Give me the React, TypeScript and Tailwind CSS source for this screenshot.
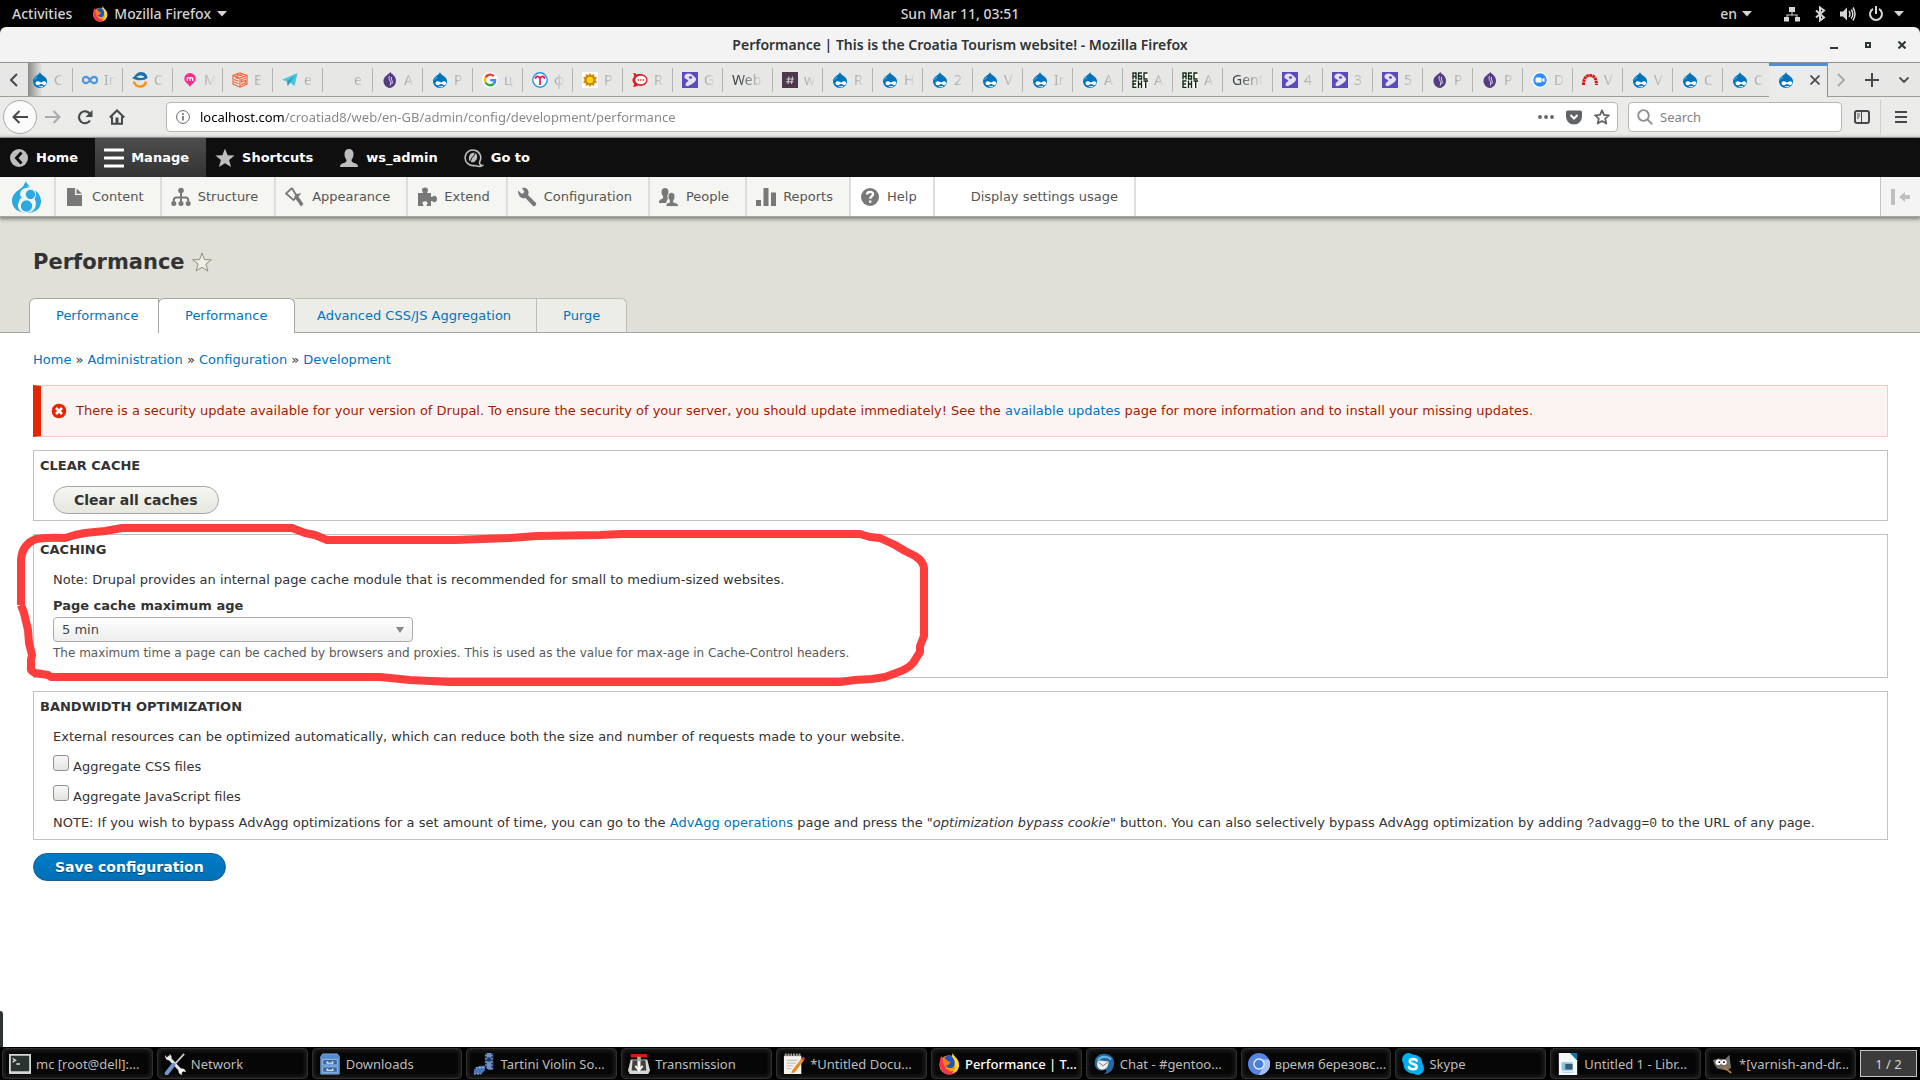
import React, { useState } from 'react';

type FaviconName =
  | 'drupal' | 'infinity' | 'swirl' | 'pin' | 'cube' | 'plane' | 'purple' | 'google' | 'curl' | 'sun'
  | 'bubble' | 'gentoo' | 'hash' | 'abc' | 'zoom' | 'arc' | 'none';

interface BrowserTab {
  icon: FaviconName;
  label: string;
}

const TABS: BrowserTab[] = [
  { icon: 'drupal', label: 'C' },
  { icon: 'infinity', label: 'In' },
  { icon: 'swirl', label: 'C' },
  { icon: 'pin', label: 'M' },
  { icon: 'cube', label: 'E' },
  { icon: 'plane', label: 'e' },
  { icon: 'none', label: 'e' },
  { icon: 'purple', label: 'A' },
  { icon: 'drupal', label: 'P' },
  { icon: 'google', label: 'ц' },
  { icon: 'curl', label: 'ф' },
  { icon: 'sun', label: 'P' },
  { icon: 'bubble', label: 'R' },
  { icon: 'gentoo', label: 'G' },
  { icon: 'none', label: 'Web' },
  { icon: 'hash', label: 'w' },
  { icon: 'drupal', label: 'R' },
  { icon: 'drupal', label: 'H' },
  { icon: 'drupal', label: '2' },
  { icon: 'drupal', label: 'V' },
  { icon: 'drupal', label: 'In' },
  { icon: 'drupal', label: 'A' },
  { icon: 'abc', label: 'A' },
  { icon: 'abc', label: 'A' },
  { icon: 'none', label: 'Gent' },
  { icon: 'gentoo', label: '4' },
  { icon: 'gentoo', label: '3' },
  { icon: 'gentoo', label: '5' },
  { icon: 'purple', label: 'P' },
  { icon: 'purple', label: 'P' },
  { icon: 'zoom', label: 'D' },
  { icon: 'arc', label: 'V' },
  { icon: 'drupal', label: 'V' },
  { icon: 'drupal', label: 'C' },
  { icon: 'drupal', label: 'C' },
];

const Favicon: React.FC<{ name: FaviconName }> = ({ name }) => {
  const props = { viewBox: '0 0 16 16', className: 'w-4 h-4 shrink-0' };
  switch (name) {
    case 'drupal':
      return (
        <svg {...props}>
          <path d="M8 0C8.4 1.8 9.7 2.7 11 3.5 13.4 5 15 6.900 15 9.300 15 13 12 16 8 16S1 13 1 9.300C1 6.900 2.600 4.900 4.800 3.500 6.300 2.500 7.700 1.700 8 0Z" fill="#0073ba" />
          <path d="M4.500 4.800C3 6 2.200 7 2 8.500c1.500-1.500 2.500-2 3.500-3.500Z" fill="#5bb0e4" />
          <path d="M5.800 9.200C7.600 9.200 8.400 10.500 9.200 10.500S10.600 9.300 12.200 9.300c1.400 0 2 .9 2 1.800 0 1.200-.8 2.100-2 2.100-1.300 0-2-1.200-3-1.200S7.400 13.200 5.900 13.200C4.400 13.200 3.500 12.300 3.500 11.200S4.500 9.200 5.800 9.200Z" fill="#fff" />
          <path d="M6.800 14.200c1.300.8 3 .8 4.300 0" stroke="#fff" strokeWidth="1" fill="none" />
        </svg>
      );
    case 'infinity':
      return (
        <svg {...props}>
          <path d="M8 8C6.800 6 5.600 4.800 4 4.800a3.200 3.200 0 0 0 0 6.400c1.600 0 2.800-1.200 4-3.200s2.400-3.200 4-3.200a3.200 3.200 0 0 1 0 6.400c-1.600 0-2.800-1.200-4-3.200Z" fill="none" stroke="#5294d8" strokeWidth="2.200" />
        </svg>
      );
    case 'swirl':
      return (
        <svg {...props}>
          <path d="M0 6C3 5 4 0 9 0c4 0 6.500 3 6.500 6-3 2.500-10 3.500-15.500 0Z" fill="#1d6fa9" />
          <path d="M4.500 5c2-2 6-2 8 0-2 1.300-5 1.300-8 0Z" fill="#d8eff8" />
          <path d="M1.800 9.500c1 3.500 3.500 5 6.200 5s5.500-1.500 6-5" fill="none" stroke="#f7941e" strokeWidth="2.600" />
        </svg>
      );
    case 'pin':
      return (
        <svg {...props}>
          <path d="M8 1a6 5.800 0 0 1 5.800 5.800C13.800 10.500 9 12 8 15 7 12 2.300 10.500 2.300 6.800A5.800 5.800 0 0 1 8 1Z" fill="#fb2b8c" />
          <path d="M5.300 9V5.500M5.300 6.200q1.400-1.200 2.700 0V9M8 6.200q1.400-1.200 2.700 0V9" fill="none" stroke="#fff" strokeWidth="1.200" />
        </svg>
      );
    case 'cube':
      return (
        <svg {...props} fill="none" stroke="#f26a3f" strokeWidth="1.200">
          <path d="M8 .8 15 3.500v8.500L8 15.200 1 12V3.500ZM1 3.500 8 6l7-2.500M8 6v9M3 5.500l3.500 1.200M2 7.500l4.500 1.800M2 10l4.500 1.800M14 6 9.500 7.800v2l4-1.400v2.400l-4 1.800M5 2.500l6.500 2M4.500 4 11 2" />
        </svg>
      );
    case 'plane':
      return (
        <svg {...props}>
          <path d="M0 7.800 15.500 1 12.500 14 8 10.500 5.800 14 5 9.600Z" fill="#47c5de" />
          <path d="M5 9.600 13 3.500 8 10.500 5.800 14Z" fill="#2b9fba" />
        </svg>
      );
    case 'purple':
      return (
        <svg {...props}>
          <path d="M8.500 0c.3 2 5.500 3 5.500 8.500 0 4.500-3 7-6 7.500C4 15.500 1.500 12.500 1.500 9 1.500 4.500 5 3.500 8.500 0Z" fill="#553c86" />
          <path d="M7.500 4c-2 3.500 2.500 5 .8 9.500M9.500 5c-1.200 2.500 2 4 .3 7" fill="none" stroke="#eee" strokeWidth=".9" />
        </svg>
      );
    case 'google':
      return (
        <svg {...props}>
          <circle cx="8" cy="8" r="8" fill="#fff" />
          <g fill="none" strokeWidth="2.400">
            <path d="M11.800 4.200A5.200 5.200 0 0 0 3.500 5.500" stroke="#ea4335" />
            <path d="M3.500 5.500a5.200 5.200 0 0 0 0 5" stroke="#fbbc05" />
            <path d="M3.500 10.500a5.200 5.200 0 0 0 8 1.500" stroke="#34a853" />
            <path d="M11.500 12A5 5 0 0 0 13.200 8.300H8.200" stroke="#4285f4" />
          </g>
        </svg>
      );
    case 'curl':
      return (
        <svg {...props}>
          <circle cx="8" cy="8" r="7.200" fill="#fff" stroke="#1a9bf0" strokeWidth="1.400" />
          <path d="M3.500 7c0-3.500 3.500-3.500 4.500-.5 1-3 4.500-3 4.500.5M8 5.500V13" fill="none" stroke="#e8175d" strokeWidth="1.700" />
        </svg>
      );
    case 'sun':
      return (
        <svg {...props}>
          <path d="M0 0h16v16H0z" fill="#fff" />
          <path d="m8 1 1.500 2.200L12 2l.5 2.700L15 5.500 13.500 8l1.500 2.500-2.500.8L12 14l-2.500-1.200L8 15l-1.500-2.200L4 14l-.5-2.700L1 10.500 2.500 8 1 5.500l2.500-.8L4 2l2.500 1.200Z" fill="#d98a00" />
          <circle cx="8" cy="8" r="4" fill="#ffd21c" stroke="#c26a00" strokeWidth=".8" />
        </svg>
      );
    case 'bubble':
      return (
        <svg {...props}>
          <path d="M1 1c2 0 3 .6 3.600 1.400C11 1 15.500 4 15.500 8s-4 6.800-9.500 5.600C4.600 14.500 3 15 1 14.800 2 13.500 2.200 12.500 2 11.500-.2 9 0 7 2 5 2.200 3.500 2 2 1 1Z" fill="#db2323" />
          <ellipse cx="8.800" cy="8" rx="5.500" ry="4.200" fill="#fff" />
          <path d="M5.700 8h1.400M8.200 8h1.400M10.700 8h1.400" stroke="#db2323" strokeWidth="1.500" />
        </svg>
      );
    case 'gentoo':
      return (
        <svg {...props}>
          <path d="M0 0h16v16H0z" fill="#5d4bbd" />
          <path d="M3.500 2.500C7 0 11 2.500 14 6.500c1 2-3 5.500-8 7.500-2.500.5-3.500-1.500-1-4C7 8.500 6.500 8 5 7.500 2.500 6.500 1.500 4.500 3.500 2.500Z" fill="#e4e2f5" />
          <ellipse cx="8.500" cy="5.500" rx="1.600" ry="1.200" fill="#5d4bbd" />
        </svg>
      );
    case 'hash':
      return (
        <svg {...props}>
          <path d="M0 0h16v16H0z" fill="#4d394b" />
          <path d="M7 4.500 6 12M10.500 4.500l-1 7.500M4.500 7h7.500M4 9.800h7.500" stroke="#d7d2d6" strokeWidth="1" />
        </svg>
      );
    case 'abc':
      return (
        <svg {...props} fill="none" stroke="#12290f" strokeWidth="1.400">
          <path d="M0 0h16v16H0z" fill="#fff" stroke="none" />
          <path d="M1 7.500V1h3v6.500M1 4.500h3M10 1H6.500v6h3V4h-3M15.500 1H12v6h3.500M4.500 9H1v6.500h3.500M1 12h3M6.500 8.500v7.500M9.500 8.500v7.500M6.500 12h3M11.500 9h4.500M13.700 9v7" />
        </svg>
      );
    case 'zoom':
      return (
        <svg {...props}>
          <circle cx="8" cy="8" r="7.300" fill="#2d8cff" stroke="#fff" strokeWidth="1.200" />
          <path d="M3.600 5.500h4.900c.8 0 1 .5 1 1v4h-5c-.6 0-1-.4-1-1ZM10 7.300l2.500-1.800v5L10 8.800Z" fill="#fff" />
        </svg>
      );
    case 'arc':
      return (
        <svg {...props}>
          <path d="M1.500 13c0-6 2-9.500 6.500-9.500s6.500 3.500 6.500 9.500" fill="none" stroke="#d61414" strokeWidth="3" strokeDasharray="2.500 .6" />
        </svg>
      );
    default:
      return null;
  }
};

const FirefoxIcon: React.FC<{ className?: string }> = ({ className }) => (
  <svg viewBox="0 0 24 24" className={className}>
    <circle cx="12" cy="13" r="10.500" fill="#ff9a1f" />
    <path d="M2 9C1 16 5 24 13 23.500c5 0 8-3 9-6-4 3-9 3.500-12 .5C7 16 6 12 8 9L5 6 4 3C3 5 2 6.500 2 9Z" fill="#f6324f" />
    <path d="M16 0c1 4 7 6 7 13 0 5-4 9-8 9 4-3 5-8 3-11-1-3-4-5-2-11Z" fill="#ffd837" />
    <path d="M7 6c2-4 7-4 9-1 3 3 3 9 0 11-3 1-7 0-8-3l4-2-1-2-3-1Z" fill="#1d55c0" />
    <path d="M5 6c3 0 4 1 6 3l3 1-3 3c-2 0-3 1-2 3-3-2-4-6-4-10Z" fill="#ff7a18" />
  </svg>
);

const Caret: React.FC = () => (
  <svg viewBox="0 0 10 6" className="w-[10px] h-[6px]"><path d="M0 0h10L5 5.500Z" fill="#d6d6d6" /></svg>
);

const GnomeBar: React.FC = () => (
  <header className="h-[27px] bg-black text-[#d3d3d3] text-[14px] font-medium grid grid-cols-3 items-center font-['Noto_Sans',sans-serif]">
    <div className="flex items-center pl-3">
      <button>Activities</button>
      <button className="flex items-center ml-5">
        <FirefoxIcon className="w-4 h-4 mr-[6px]" />
        <span className="mr-[6px]">Mozilla Firefox</span>
        <Caret />
      </button>
    </div>
    <div className="text-center">Sun Mar 11, 03:51</div>
    <div className="flex items-center justify-end pr-4">
      <button className="flex items-center gap-[5px] mr-8">en <Caret /></button>
      <svg viewBox="0 0 16 16" className="w-4 h-4 mr-3" fill="#d6d6d6">
        <path d="M5 1h6v5H5zM0 11h5v4.500H0zM11 11h5v4.500h-5zM7.500 6h1v2.500h5V11h-1V9.500h-9V11h-1V8.500h5Z" />
      </svg>
      <svg viewBox="0 0 16 16" className="w-4 h-4 mr-3" fill="none" stroke="#d6d6d6" strokeWidth="2">
        <path d="m4 4.500 8 7-4 3V1.500l4 3-8 7" />
      </svg>
      <svg viewBox="0 0 16 16" className="w-4 h-4 mr-3" fill="none" stroke="#d6d6d6" strokeWidth="1.500">
        <path d="M0 5.500h3l4-4v13l-4-4H0Z" fill="#d6d6d6" stroke="none" />
        <path d="M9 5q2 3 0 6M11.300 3.500q3 4.500 0 9M13 1.500q4 6.500 0 13" />
      </svg>
      <svg viewBox="0 0 16 16" className="w-4 h-4 mr-[10px]" fill="none" stroke="#d6d6d6" strokeWidth="2">
        <path d="M5 2.800a6 6 0 1 0 6 0M8 0v8" />
      </svg>
      <Caret />
    </div>
  </header>
);

const TitleBar: React.FC = () => (
  <div className="h-9 bg-[#f3f3f3] rounded-t-md border-b border-[#8f908c] grid grid-cols-[1fr_auto_1fr] items-center text-[14px] font-semibold text-[#2e3436] font-['Noto_Sans',sans-serif]">
    <span />
    <h2>Performance | This is the Croatia Tourism website! - Mozilla Firefox</h2>
    <div className="flex items-center justify-end gap-[26px] pr-[14px]">
      <button aria-label="Minimize"><svg viewBox="0 0 8 8" className="w-2 h-2"><path d="M0 6h8v2H0z" fill="#2e3436" /></svg></button>
      <button aria-label="Maximize"><svg viewBox="0 0 8 8" className="w-2 h-2"><path d="M2 2h4v4H2z" fill="none" stroke="#2e3436" strokeWidth="2" /></svg></button>
      <button aria-label="Close"><svg viewBox="0 0 8 8" className="w-2 h-2"><path d="m.5.5 7 7m0-7-7 7" stroke="#2e3436" strokeWidth="2" /></svg></button>
    </div>
  </div>
);

const tabWidth = (i: number) => {
  if (i === 0) return 'w-[45px] pl-1 border-[#b3b3b1]';
  if (i === TABS.length - 1) return 'w-[46px] pl-[9px] border-transparent';
  return 'w-[50px] pl-[9px] border-[#b3b3b1]';
};

const TabStrip: React.FC = () => (
  <div className="h-[34px] bg-[#e7e7e6] flex border-b border-[#9c9c99] text-[14px] text-[#3c4144] font-['Noto_Sans',sans-serif]">
    <button aria-label="Scroll tabs left" className="w-7 shrink-0 flex items-center justify-center">
      <svg viewBox="0 0 8 14" className="w-2 h-[14px]"><path d="M7 1 1 7l6 6" fill="none" stroke="#45494c" strokeWidth="2" /></svg>
    </button>
    <div className="flex flex-1 min-w-0 bg-linear-to-r from-[#8c8c8c] to-[#e7e7e6] to-[14px]">
      {TABS.map((tab, i) => (
        <div key={i} className={`flex items-center shrink-0 h-6 mt-[5px] overflow-hidden border-r ${tabWidth(i)}`}>
          <Favicon name={tab.icon} />
          {tab.icon !== 'none' ? (
            <span className="ml-[6px] w-3 overflow-hidden opacity-40 [mask-image:linear-gradient(to_right,black,transparent)]">{tab.label}</span>
          ) : tab.label === 'e' ? (
            <span className="ml-[22px] w-3 opacity-40 [mask-image:linear-gradient(to_right,black,transparent)]">{tab.label}</span>
          ) : (
            <span className="w-[31px] overflow-hidden [mask-image:linear-gradient(to_right,black_20%,transparent)]">{tab.label}</span>
          )}
        </div>
      ))}
      <div className="w-[59px] shrink-0 h-[34px] bg-[#ebebea] border-t-[3px] border-r border-t-[#4a90d9] border-r-[#8f908c] flex items-center pl-[9px] pb-[3px] gap-4">
        <Favicon name="drupal" />
        <button aria-label="Close tab">
          <svg viewBox="0 0 10 10" className="w-[10px] h-[10px]"><path d="m.5.5 9 9m0-9-9 9" stroke="#4c4f51" strokeWidth="1.800" /></svg>
        </button>
      </div>
    </div>
    <div className="flex items-center gap-5 pr-[11px]">
      <button aria-label="Scroll tabs right"><svg viewBox="0 0 8 14" className="w-2 h-[14px]"><path d="m1 1 6 6-6 6" fill="none" stroke="#aaabab" strokeWidth="2" /></svg></button>
      <button aria-label="New tab"><svg viewBox="0 0 14 14" className="w-[14px] h-[14px]"><path d="M7 0v14M0 7h14" stroke="#45494c" strokeWidth="2" /></svg></button>
      <button aria-label="List all tabs"><svg viewBox="0 0 10 6" className="w-[10px] h-[6px]"><path d="m.5.5 4.500 4.500 4.500-4.500" fill="none" stroke="#45494c" strokeWidth="1.800" /></svg></button>
    </div>
  </div>
);

const NavBar: React.FC = () => {
  const [url, setUrl] = useState('localhost.com/croatiad8/web/en-GB/admin/config/development/performance');

  return (
    <div className="h-[41px] bg-[#ebebea] border-b border-[#b3b3b1] flex items-center pl-[3px] pr-[13px] text-[13px] font-['Noto_Sans',sans-serif]">
      <button aria-label="Back" className="w-[34px] h-[34px] rounded-full bg-[#fbfbfb] border border-[#a9a9a7] flex items-center justify-center shrink-0">
        <svg viewBox="0 0 16 14" className="w-4 h-[14px]"><path d="M7.500 1 1.500 7l6 6M1.500 7H16" fill="none" stroke="#45494c" strokeWidth="2" /></svg>
      </button>
      <button aria-label="Forward" className="ml-2">
        <svg viewBox="0 0 16 14" className="w-4 h-[14px]"><path d="m8.500 1 6 6-6 6M14.500 7H0" fill="none" stroke="#a9abac" strokeWidth="2" /></svg>
      </button>
      <button aria-label="Reload" className="ml-4">
        <svg viewBox="0 0 16 16" className="w-4 h-4"><path d="M13 11.500A6 6 0 1 1 13 5" fill="none" stroke="#45494c" strokeWidth="2.200" /><path d="M15.500 1v7h-7Z" fill="#45494c" /></svg>
      </button>
      <button aria-label="Home" className="ml-4">
        <svg viewBox="0 0 16 16" className="w-4 h-4"><path d="M.8 8.500 8 1.500l7.200 7M3 7.500v7.300h10V7.500" fill="none" stroke="#45494c" strokeWidth="2" /><path d="M6.500 8.500h3V15h-3z" fill="#45494c" /></svg>
      </button>
      <div className="flex-1 min-w-0 h-[30px] ml-[41px] bg-white border border-[#b6b6b3] rounded flex items-center pl-[9px] pr-[7px]">
        <svg viewBox="0 0 14 14" className="w-[14px] h-[14px] shrink-0" fill="none" stroke="#65696b"><circle cx="7" cy="7" r="6.400" /><path d="M7 6v4.500M7 3.300V5" strokeWidth="1.600" /></svg>
        <input
          aria-label="Address"
          value={url}
          onChange={(e) => setUrl(e.target.value)}
          className="flex-1 min-w-0 ml-[10px] outline-none text-transparent bg-clip-text bg-linear-to-r from-black from-[84px] to-[#858585] to-[84px]"
        />
        <button aria-label="Page actions"><svg viewBox="0 0 16 4" className="w-4 h-1" fill="#616466"><circle cx="2" cy="2" r="1.900" /><circle cx="8" cy="2" r="1.900" /><circle cx="14" cy="2" r="1.900" /></svg></button>
        <button aria-label="Save to Pocket" className="ml-3"><svg viewBox="0 0 16 15" className="w-4 h-[15px]"><path d="M2 .5h12c1.300 0 2 .7 2 2V6c0 5-3.600 8.500-8 8.500S0 11 0 6V2.500c0-1.300.7-2 2-2Z" fill="#616466" /><path d="m4.500 5 3.500 3.500L11.500 5" fill="none" stroke="#fff" strokeWidth="2" /></svg></button>
        <button aria-label="Bookmark this page" className="ml-3"><svg viewBox="0 0 16 16" className="w-4 h-4"><path d="m8 1.300 2 4.500 4.900.5-3.700 3.300 1.100 4.900L8 12l-4.300 2.500 1.100-4.900L1.100 6.300 6 5.800Z" fill="none" stroke="#616466" strokeWidth="1.800" strokeLinejoin="round" /></svg></button>
      </div>
      <label className="w-[214px] h-[30px] ml-[10px] bg-white border border-[#b6b6b3] rounded flex items-center pl-2 gap-[7px]">
        <svg viewBox="0 0 16 16" className="w-4 h-4 shrink-0" fill="none" stroke="#8c8f90" strokeWidth="1.800"><circle cx="6.500" cy="6.500" r="5.300" /><path d="m10.300 10.300 5 5" /></svg>
        <input aria-label="Search" placeholder="Search" className="flex-1 min-w-0 outline-none placeholder:text-[#7f8283]" />
      </label>
      <button aria-label="Sidebars" className="ml-3">
        <svg viewBox="0 0 16 14" className="w-4 h-[14px]" fill="none" stroke="#45494c"><rect x="1" y="1" width="14" height="12" rx="2" strokeWidth="2" /><path d="M7.500 1v12M3 4h3M3 6h3M3 8h2" /></svg>
      </button>
      <span className="w-px h-[34px] bg-[#cfcfcd] ml-[10px]" />
      <button aria-label="Open menu" className="ml-[14px]">
        <svg viewBox="0 0 12 12" className="w-3 h-3"><path d="M0 1h12M0 6h12M0 11h12" stroke="#45494c" strokeWidth="2" /></svg>
      </button>
    </div>
  );
};

const ADMIN_LINKS = [
  {
    label: 'Home',
    icon: <><circle cx="10" cy="10" r="9" fill="#bebebe" /><path d="m12.500 4.500-5 5.500 5 5.500" fill="none" stroke="#0f0f0f" strokeWidth="3" /></>,
  },
  {
    label: 'Manage',
    icon: <path d="M1 2h18M1 10h18M1 18h18" stroke="#fff" strokeWidth="3.200" strokeLinecap="round" />,
    active: true,
  },
  {
    label: 'Shortcuts',
    icon: <path d="m10 .5 2.600 6.700 7 .4-5.500 4.500 2 7L10 15.300 3.900 19l2-7L.4 7.600l7-.4Z" fill="#bebebe" />,
  },
  {
    label: 'ws_admin',
    icon: <path d="M10 1c3 0 4.500 2 4.500 5 0 3-1 4-2 6 0 2 1 2.500 3.500 3.200 2 .6 3 1.800 3 3.800H1c0-2 1-3.200 3-3.800C6.500 14.500 7.500 14 7.500 12c-1-2-2-3-2-6 0-3 1.500-5 4.500-5Z" fill="#bebebe" />,
  },
  {
    label: 'Go to',
    icon: (
      <>
        <path d="M15.500 14A7.800 7.800 0 1 0 10 17.500c3 0 5.500 2.500 8.500 0-2 0-3-1.500-3-3.500Z" fill="none" stroke="#bebebe" strokeWidth="1.600" />
        <ellipse cx="9" cy="9.500" rx="4" ry="5" transform="rotate(25 9 9.500)" fill="#bebebe" />
        <path d="M11 5c-1 4-4 4-4.500 9" fill="none" stroke="#0f0f0f" />
      </>
    ),
  },
];

const MENU_LINKS = [
  { label: 'Content', icon: <><path d="M2 1h8v7h7v11H2Z" /><path d="M11.500 1.500 17 6.800h-5.500Z" /></> },
  {
    label: 'Structure',
    icon: (
      <>
        <circle cx="10" cy="3.500" r="2.800" /><circle cx="2.800" cy="16.500" r="2.500" /><circle cx="10" cy="16.500" r="2.500" /><circle cx="17.200" cy="16.500" r="2.500" />
        <path d="M10 4v12M2.800 16v-3q0-2.500 2.500-2.500h9.400q2.500 0 2.500 2.500v3" fill="none" stroke="#787878" strokeWidth="2" />
      </>
    ),
  },
  { label: 'Appearance', icon: <><path d="M7 1 1 6.500 8.500 13 14 7.500 11 8 7 1" fill="none" stroke="#787878" strokeWidth="1.800" /><path d="m9 9.500 3-2 6.500 9.500-2.500 2.500Z" /></> },
  { label: 'Extend', icon: <path d="M1 6h5c0-1-1-1.500-1-3 0-1.700 1.200-2.500 3-2.500S11 1.500 11 3c0 1.500-1 2-1 3h4v4c2 0 2-1.300 3.500-1.300S20 10 20 12s-1 3.200-2.500 3.200S16 14 14 14v5H9.500c0-1.500 1-2 1-3S9.500 14.300 8 14.300 5.500 15 5.500 16s1 1.500 1 3H1Z" /> },
  { label: 'Configuration', icon: <path d="M1 3.500 5 7l2.500-2L5 1c3-1 6 .5 6.500 3.500.2 1.500 0 2.500-.5 3.500l8 8c1 1.500-1 4-3 3L8.500 11C5 12 1 10 1 3.500Z" /> },
  { label: 'People', icon: <><path d="M6 1c2 0 3.500 1 3.500 4 0 2-1 3-1.200 4.500L9 11l-2 5H0c0-3 1-3.500 4-4.500V9C3 8 2.500 7 2.500 5c0-3 1.500-4 3.500-4Z" /><path d="M12.500 5.500c2.200 0 3.500 1.300 3.500 4 0 2-1 3-1.300 4v1.800c3 .7 4.800 1.200 4.800 4.200H7c0-3 1-3.500 3.500-4.200v-1.800c-.5-1-1.500-2-1.500-4 0-2.700 1.300-4 3.500-4Z" stroke="#f5f5f2" strokeWidth=".8" /></> },
  { label: 'Reports', icon: <path d="M0 13h5v6H0zM7.500 1h5v18h-5zM15 5.500h5V19h-5z" /> },
  { label: 'Help', icon: <><circle cx="10" cy="10" r="9" /><path d="M7 7.500C7 5.500 8.300 4.800 10 4.800s3 .9 3 2.500c0 2-2.800 2-2.800 4.500M10.200 13.500v2.300" fill="none" stroke="#fff" strokeWidth="2.300" /></>, light: true },
  { label: 'Display settings usage', light: true },
];

const DrupalToolbar: React.FC = () => (
  <nav className="relative z-10 text-[13px] shadow-[0_1px_4px_1px_rgba(0,0,0,0.45)]">
    <div className="h-[39px] bg-[#0f0f0f] flex text-white font-bold">
      {ADMIN_LINKS.map((item) => (
        <a key={item.label} href="#" className={`flex items-center h-full pl-[9px] pr-[17px] gap-[7px] ${item.active ? 'bg-linear-to-b from-[#4d4d4d] to-[#333]' : ''}`}>
          <svg viewBox="0 0 20 20" className="w-5 h-5">{item.icon}</svg>
          {item.label}
        </a>
      ))}
    </div>
    <div className="h-10 bg-white flex text-[#565656] border-b border-[#a6a6a6]">
      <a href="#" aria-label="Drupal" className="w-[56px] bg-[#f5f5f2] border-r-2 border-[#ddd] flex items-center justify-center">
        <svg viewBox="0 0 32 32" className="w-8 h-8">
          <path d="M15 0c1 4 5 6 8 8.500 4.500 3 7 7 7 12C30 27 25 32 16 32S1 27 1 20c0-5 3-8.500 7.500-11.500C12 6 14 4 15 0Z" fill="#2ba9e0" />
          <path d="M10 9.500a8 8 0 1 1 13.500 8.500C27 23 24 32 15.500 32 6 32 5.500 23 9 19c-3-3-2-7 1-9.500Z" fill="#f5f5f2" />
          <circle cx="19.500" cy="13.500" r="4.700" fill="#2ba9e0" />
          <circle cx="15.500" cy="25" r="5.700" fill="#2ba9e0" />
          <path d="M14 1c1 4 3 5 5 6-4-1-8 1-9 3-2 3 0 6 1 7-4 1-6 5-5 10-4-4-5-9-3-13 3-5 10-6 11-13Z" fill="#2ba9e0" />
        </svg>
      </a>
      {MENU_LINKS.map((item) => (
        <a key={item.label} href="#" className={`flex items-center pl-[9px] pr-4 gap-[7px] border-r-2 border-[#ddd] ${item.light ? 'bg-white' : 'bg-[#f5f5f2]'}`}>
          <svg viewBox="0 0 20 20" className="w-5 h-5" fill="#787878">{item.icon}</svg>
          {item.label}
        </a>
      ))}
      <button aria-label="Vertical orientation" className="ml-auto w-10 bg-[#f4f4f4] border-l border-[#c4c4c4] flex items-center justify-center">
        <svg viewBox="0 0 20 16" className="w-5 h-4" fill="#bfbfbf"><path d="M0 0h4v16H0zM8 8l6-5v3h5v4h-5v3Z" /></svg>
      </button>
    </div>
  </nav>
);

const PageHeader: React.FC = () => (
  <div className="bg-[#e0e0d8] border-b border-[#a6a6a6] pt-[30px] px-[33px]">
    <div className="flex items-center gap-[7px]">
      <h1 className="text-[21px] leading-[30px] font-bold text-[#333]">Performance</h1>
      <button aria-label="Add to shortcuts">
        <svg viewBox="0 0 20 20" className="w-5 h-5"><path d="m10 1 2.500 6.600 6.900.2-5.500 4.300 2 7L10 15.300 4.100 19l2-6.900L.6 7.800l6.900-.2Z" fill="#eeeee8" stroke="#8f8d78" /></svg>
      </button>
    </div>
    <ul className="flex mt-[21px] -ml-1 -mb-px text-[13px] text-[#0074bd]">
      <li><a href="#" className="flex items-center h-[35px] w-[130px] pl-[26px] bg-white border border-b-0 border-[#a6a6a6] rounded-tl-md">Performance</a></li>
      <li><a href="#" className="flex items-center h-[35px] w-[137px] -ml-px pl-[26px] bg-white border border-b-0 border-[#a6a6a6] rounded-t-md">Performance</a></li>
      <li><a href="#" className="flex items-center h-[34px] pl-[22px] pr-[25px] bg-[#ecede6] border-t border-r border-[#bcbcb8]">Advanced CSS/JS Aggregation</a></li>
      <li><a href="#" className="flex items-center h-[34px] px-[26px] bg-[#ecede6] border-t border-r border-[#bcbcb8] rounded-tr-md">Purge</a></li>
    </ul>
  </div>
);

const LINK = 'text-[#0074bd]';
const FIELDSET = 'relative border border-[#c2c2c2] mb-[13px] pt-[5px] pl-[19px]';
const LEGEND = 'font-bold uppercase -ml-[13px]';

// Freehand marker line around the caching settings
const MarkerLine: React.FC = () => (
  <svg viewBox="14 519 920 172" className="absolute -left-5 -top-4 w-[920px] h-[172px] pointer-events-none">
    <path
      d="M21 605V560Q22 544 36 539 50 537 65 538L75 535 85 533 105 531 122 528H292L305 533 315 535 327 540H455L510 538 537 536 600 535 622 534H860L870 537 880 538 895 545 905 551 915 556Q923 561 924 568V636L920 646V652L913 663Q908 669 896 673L885 677 872 679 855 680 840 682H450L430 681 410 680 380 677H51L48 675 35 673Q30 671 31 667V660L32 655 29 643 28 630 24 613 21 605"
      fill="none"
      stroke="#ff3d3d"
      strokeWidth="8"
      strokeLinejoin="round"
    />
  </svg>
);

const PerformanceForm: React.FC = () => {
  const [maxAge, setMaxAge] = useState('300');
  const [aggregateCss, setAggregateCss] = useState(false);
  const [aggregateJs, setAggregateJs] = useState(false);

  const checkbox = 'appearance-none w-4 h-4 mr-1 border border-[#929292] rounded-[3px] bg-linear-to-b from-[#f7f7f7] to-[#e4e4e2] checked:bg-[#0074bd]';

  return (
    <form onSubmit={(e) => e.preventDefault()}>
      <section className={`${FIELDSET} h-[71px]`}>
        <h2 className={LEGEND}>Clear cache</h2>
        <button type="button" className="h-7 px-5 mt-[10px] rounded-full border border-[#a6a6a6] bg-linear-to-b from-[#f6f6f3] to-[#e7e7df] text-[14px] font-bold text-[#333]">
          Clear all caches
        </button>
      </section>

      <section className={`${FIELDSET} pb-[14px]`}>
        <h2 className={LEGEND}>Caching</h2>
        <p className="mt-[10px]">Note: Drupal provides an internal page cache module that is recommended for small to medium-sized websites.</p>
        <label htmlFor="max-age" className="block font-bold mt-[6px]">Page cache maximum age</label>
        <div className="relative w-[360px] mt-px mb-px">
          <select
            id="max-age"
            value={maxAge}
            onChange={(e) => setMaxAge(e.target.value)}
            className="block appearance-none w-full h-[25px] pl-2 rounded border border-[#aaa] bg-linear-to-b from-white via-[#f6f6f6] to-[#eee] text-[#444]"
          >
            <option value="0">&lt;no caching&gt;</option>
            <option value="60">1 min</option>
            <option value="180">3 min</option>
            <option value="300">5 min</option>
            <option value="600">10 min</option>
          </select>
          <svg viewBox="0 0 8 6" className="absolute right-[9px] top-[10px] w-2 h-[6px] pointer-events-none"><path d="M0 0h8L4 6Z" fill="#888" /></svg>
        </div>
        <p className="text-[12px] text-[#595959]">The maximum time a page can be cached by browsers and proxies. This is used as the value for max-age in Cache-Control headers.</p>
        <MarkerLine />
      </section>

      <section className={`${FIELDSET} pb-[6px]`}>
        <h2 className={LEGEND}>Bandwidth optimization</h2>
        <p className="mt-[10px]">External resources can be optimized automatically, which can reduce both the size and number of requests made to your website.</p>
        <div className="flex items-start mt-2 h-[30px]">
          <input id="css" type="checkbox" checked={aggregateCss} onChange={(e) => setAggregateCss(e.target.checked)} className={checkbox} />
          <label htmlFor="css" className="pt-[2px]">Aggregate CSS files</label>
        </div>
        <div className="flex items-start h-7">
          <input id="js" type="checkbox" checked={aggregateJs} onChange={(e) => setAggregateJs(e.target.checked)} className={checkbox} />
          <label htmlFor="js" className="pt-[2px]">Aggregate JavaScript files</label>
        </div>
        <p>
          NOTE: If you wish to bypass AdvAgg optimizations for a set amount of time, you can go to the{' '}
          <a href="#" className={LINK}>AdvAgg operations</a> page and press the "<em>optimization bypass cookie</em>" button. You can also
          selectively bypass AdvAgg optimization by adding <code className="font-['Liberation_Mono',monospace] leading-none">?advagg=0</code> to the URL of any page.
        </p>
      </section>

      <button type="submit" className="h-7 px-[21px] rounded-full border border-[#1e5c90] bg-linear-to-b from-[#007bc6] to-[#0071b8] text-[14px] font-bold text-white text-shadow-[0_1px_rgba(0,0,0,0.5)]">
        Save configuration
      </button>
    </form>
  );
};

const TASKS = [
  {
    label: 'mc [root@dell]:...',
    icon: <><path d="M0 1h24v22H0z" fill="#d5d7d3" /><path d="M2 3h20v17H2z" fill="#2b3331" /><path d="m4 6 3 2-3 2M8 12h4" stroke="#dfe4df" fill="none" strokeWidth="1.500" /></>,
  },
  {
    label: 'Network',
    icon: <><path d="m4 4 16 17" stroke="#e4e6e6" strokeWidth="3.500" /><path d="M1 2q0 6 5 6 3-1 2-5L6 1v4H3ZM18 17q5-1 6 4l-3-1-2 1 1 3q-5-1-4-6Z" fill="#f3f3f3" /><path d="M22 1 11 13" stroke="#c7cbcc" strokeWidth="2" /><path d="m10 13-7 9" stroke="#7296cc" strokeWidth="4.500" strokeLinecap="round" /></>,
  },
  {
    label: 'Downloads',
    icon: <><path d="m4 1h16l2 3v19H2V4Z" fill="#548cd0" stroke="#87b1e4" /><path d="M4 7h16v6H4zM4 15h16v6H4z" fill="#3769ad" stroke="#9bc0ea" /><path d="M9 9v2h6V9M9 17v2h6v-2" fill="none" stroke="#e9e4cc" strokeWidth="1.500" /></>,
  },
  {
    label: 'Tartini Violin So...',
    icon: <><path d="M13 0h9v18c-4 1-7 0-9-3Z" fill="#6f8fc4" /><path d="M14 0v17M21 0v18" stroke="#222c3b" strokeWidth="2" strokeDasharray="2 1.500" /><path d="M1 23v-5l6-4h6v5l-4 4Z" fill="#4776b8" /><path d="M1 23h8M3 16h10" stroke="#c7d2df" strokeDasharray="2 1.500" /><circle cx="17.500" cy="7" r="2.500" fill="#1d3d7b" /></>,
  },
  {
    label: 'Transmission',
    icon: <><path d="M3 7h18l3 12-2 4H2l-2-4Z" fill="#dad8d2" /><path d="M3 1h18v4H3z" fill="#d61717" /><path d="M10 4h4v12h-4z" fill="#aaa" /><path d="M5 8h5v8h4V8h5l1 11H4Z" fill="#404340" /><path d="M12 9v9m-4-4 4 5 4-5" stroke="#fff" strokeWidth="2" fill="none" /></>,
  },
  {
    label: '*Untitled Docu...',
    icon: <><path d="M1 3h19v20H1z" fill="#f4f3ee" /><path d="M2 2h17" stroke="#a5a39b" strokeWidth="3" strokeDasharray="2 1" /><path d="M4 8h12M4 11h10M4 14h7M4 17h5" stroke="#b1b0aa" /><path d="m10 19 10-13 3 2-10 13-4 1Z" fill="#e98b2c" /><path d="m20 6 2-2 2 2-1 2Z" fill="#d94444" /></>,
  },
  { label: 'Performance | T...', icon: null, active: true },
  {
    label: 'Chat - #gentoo...',
    icon: <><path d="M2 12C1 4 8 0 14 1c8 1 11 8 8 15-2 5-7 7-10 7 3-2 3-4 2-5-6 3-12 0-12-6Z" fill="#27689f" /><path d="M5 8c4-5 10-5 15-1" stroke="#6ab6e4" strokeWidth="2" fill="none" /><path d="M5 9c2-2 7 0 12 0 0 5-2 9-6 9-4 1-8-3-6-9Z" fill="#ededed" /><path d="m6 10 5 4 5-4" stroke="#646f7a" fill="none" /></>,
  },
  {
    label: 'время березовс...',
    icon: <><circle cx="12" cy="12" r="12" fill="#5685e3" /><path d="M12 7h11a12 12 0 0 1-11 17l5-10Z" fill="#a4c2f8" /><circle cx="12" cy="12" r="5.500" fill="#4b7ddd" stroke="#e6effc" strokeWidth="1.500" /></>,
  },
  {
    label: 'Skype',
    icon: <><circle cx="7" cy="7" r="7" fill="#00aff0" /><circle cx="17" cy="17" r="7" fill="#00aff0" /><circle cx="12" cy="12" r="10.500" fill="#00aff0" /><path d="M16 8.500C15 6 8.500 6 8.500 9c0 4 7.500 2 7.500 6 0 3.500-7 3.500-8.500.5" fill="none" stroke="#fff" strokeWidth="2.800" strokeLinecap="round" /></>,
  },
  {
    label: 'Untitled 1 - Libr...',
    icon: <><path d="M2 0h13l7 8v16H2Z" fill="#f5f7f8" /><path d="M14 0h8v8Z" fill="#1177a8" /><path d="M5 10h12v9H5z" fill="#89c4df" /><path d="M9 12h8v6H9z" fill="#355e74" /><path d="M6 21h12" stroke="#9ac6dc" /></>,
  },
  {
    label: '*[varnish-and-dr...',
    icon: <><path d="m1 8 6-2 7 1 5-5 1 9 1 5-5 3-10-2-3-4Z" fill="#77736a" /><circle cx="7" cy="10" r="3" fill="#fff" /><circle cx="13" cy="10" r="3" fill="#fff" /><circle cx="8" cy="10" r="1" /><circle cx="13" cy="10" r="1" /><path d="m13 15 8 7" stroke="#bd7737" strokeWidth="2" /></>,
  },
];

const Taskbar: React.FC = () => (
  <footer className="h-[33px] bg-black flex items-center gap-1 pl-[2px] pr-[3px] text-[13px] text-[#bdbdbd] font-['Noto_Sans',sans-serif]">
    {TASKS.map((task) => (
      <button
        key={task.label}
        className={`flex flex-1 min-w-0 items-center h-[31px] pl-[6px] gap-[5px] rounded border border-[#2f2f2f] bg-[#060606] whitespace-nowrap overflow-hidden shadow-[inset_0_0_5px_1px_#2a2a2a] ${task.active ? 'text-white font-medium' : ''}`}
      >
        {task.icon ? <svg viewBox="0 0 24 24" className="w-[22px] h-[22px] shrink-0">{task.icon}</svg> : <FirefoxIcon className="w-[22px] h-[22px] shrink-0" />}
        <span>{task.label}</span>
      </button>
    ))}
    <button className="w-[57px] h-[27px] border border-[#c4c4c4] bg-[#3b3b3b] text-[#d4d4d4]">1 / 2</button>
  </footer>
);

const App: React.FC = () => (
  <div className="relative min-h-screen flex flex-col bg-black font-['DejaVu_Sans',sans-serif] text-[13px] leading-5 text-[#333]">
    <GnomeBar />
    <TitleBar />
    <TabStrip />
    <NavBar />
    <DrupalToolbar />
    <PageHeader />
    <main className="flex-1 bg-white pl-[33px] pr-8 pt-[17px]">
      <nav aria-label="Breadcrumb">
        <a href="#" className={LINK}>Home</a> » <a href="#" className={LINK}>Administration</a> » <a href="#" className={LINK}>Configuration</a> » <a href="#" className={LINK}>Development</a>
      </nav>
      <div role="alert" className="flex items-center h-[52px] mt-[15px] mb-[13px] pl-[10px] gap-[9px] border border-[#f9c9bf] border-l-8 border-l-[#e62600] bg-[#fcf4f2] text-[#a51b00]">
        <svg viewBox="0 0 16 16" className="w-4 h-4"><circle cx="8" cy="8" r="7.300" fill="#e62600" /><path d="m5 5 6 6m0-6-6 6" stroke="#fff" strokeWidth="2.500" /></svg>
        <p>
          There is a security update available for your version of Drupal. To ensure the security of your server, you should update immediately! See the{' '}
          <a href="#" className={LINK}>available updates</a> page for more information and to install your missing updates.
        </p>
      </div>
      <PerformanceForm />
    </main>
    <Taskbar />
    <span className="absolute left-0 bottom-[33px] w-[3px] h-9 bg-[#2e3436] rounded-tr" />
  </div>
);

export default App;
